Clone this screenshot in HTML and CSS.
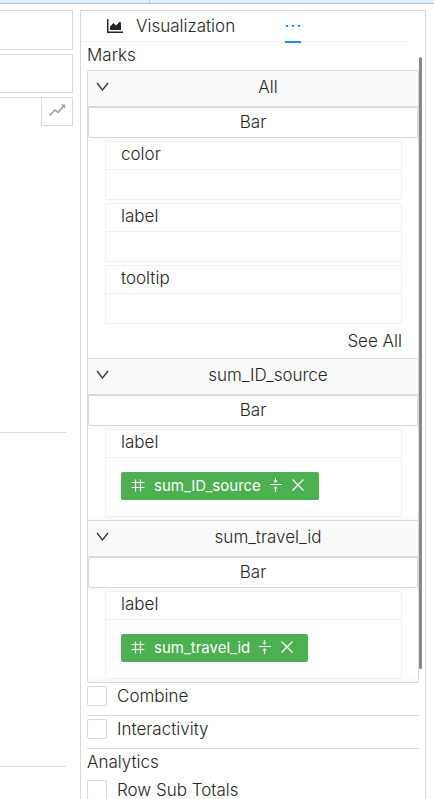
FILE: index.html
```html
<!DOCTYPE html>
<html lang="en">

<head>
    <meta charset="UTF-8">
    <meta name="viewport" content="width=device-width, initial-scale=1.0">
    <title>Visualization</title>
    <link rel="stylesheet" href="styles.css">
</head>

<body>
    <svg class="sprite" aria-hidden="true">
        <symbol id="chevron" viewBox="0 0 14 14">
            <path d="M1 3L6.500 10L12 3" fill="none" stroke="currentColor" stroke-width="1.3" />
        </symbol>
        <symbol id="hash" viewBox="0 0 14 14">
            <path d="M4.5 0.500v12M9.5 0.500v12M0.500 3.500h13M0.500 8.500h13" fill="none" stroke="currentColor" stroke-width="1.2" />
        </symbol>
        <symbol id="aggregate" viewBox="0 0 14 16">
            <path d="M1 6.500h12M6.500 0v4M6.500 9v5" fill="none" stroke="currentColor" stroke-width="1.2" />
            <path d="M4.500 2.500h4L6.500 5zM4.500 10.500h4L6.500 8z" fill="currentColor" />
        </symbol>
        <symbol id="close" viewBox="0 0 14 14">
            <path d="M1.5 0.500l11 11M12.5 0.500l-11 11" fill="none" stroke="currentColor" stroke-width="1.3" />
        </symbol>
    </svg>

    <div class="topbar">
        <div class="topbar-cell"></div>
    </div>

    <div class="layout">
        <div class="workspace">
            <div class="shelf"></div>
            <div class="shelf"></div>
            <div class="toolbar">
                <button class="chart-button" aria-label="Chart">
                    <svg width="16" height="12" viewBox="0 0 16 12">
                        <path d="M0.5 11.5L6 6L9 8.5L14.5 2" fill="none" stroke="currentColor" stroke-width="1.5" />
                        <path d="M12 0.5h4v4z" fill="currentColor" />
                    </svg>
                </button>
            </div>
            <div class="canvas"></div>
            <div class="canvas"></div>
        </div>

        <aside class="panel">
            <nav class="tabs">
                <button class="tab">
                    <svg width="16" height="14" viewBox="0 0 16 14">
                        <path d="M0 0h1.5v12.5H16V14H0z" fill="currentColor" />
                        <path d="M3 11V7.500L6.500 4L9 6.500L13 2.500L14 4V11z" fill="currentColor" />
                    </svg>
                    Visualization
                </button>
                <button class="tab tab-active" aria-label="More">
                    <svg width="16" height="14" viewBox="0 0 16 14">
                        <path d="M1 6h2v2H1zM7 6h2v2H7zM13 6h2v2h-2z" fill="currentColor" />
                    </svg>
                </button>
            </nav>

            <div class="content">
                <h2 class="title">Marks</h2>
                <div class="collapse">
                    <section class="group">
                        <button class="group-header">
                            <svg class="arrow" width="14" height="14"><use href="#chevron" /></svg>
                            <span>All</span>
                        </button>
                        <select class="mark-type" aria-label="All mark type">
                            <option>Bar</option>
                        </select>
                        <div class="cards">
                            <div class="card">
                                <div class="card-title">color</div>
                                <div class="card-body"></div>
                            </div>
                            <div class="card">
                                <div class="card-title">label</div>
                                <div class="card-body"></div>
                            </div>
                            <div class="card">
                                <div class="card-title">tooltip</div>
                                <div class="card-body"></div>
                            </div>
                        </div>
                        <a class="see-all" href="#">See All</a>
                    </section>

                    <section class="group">
                        <button class="group-header">
                            <svg class="arrow" width="14" height="14"><use href="#chevron" /></svg>
                            <span>sum_ID_source</span>
                        </button>
                        <select class="mark-type" aria-label="sum_ID_source mark type">
                            <option>Bar</option>
                        </select>
                        <div class="cards">
                            <div class="card">
                                <div class="card-title">label</div>
                                <div class="card-body card-filled">
                                    <div class="pill">
                                        <svg class="hash" width="14" height="14"><use href="#hash" /></svg>
                                        <span>sum_ID_source</span>
                                        <button class="pill-button" aria-label="Aggregate"><svg width="14" height="16"><use href="#aggregate" /></svg></button>
                                        <button class="pill-button" aria-label="Remove"><svg width="14" height="14"><use href="#close" /></svg></button>
                                    </div>
                                </div>
                            </div>
                        </div>
                    </section>

                    <section class="group">
                        <button class="group-header">
                            <svg class="arrow" width="14" height="14"><use href="#chevron" /></svg>
                            <span>sum_travel_id</span>
                        </button>
                        <select class="mark-type" aria-label="sum_travel_id mark type">
                            <option>Bar</option>
                        </select>
                        <div class="cards">
                            <div class="card">
                                <div class="card-title">label</div>
                                <div class="card-body card-filled">
                                    <div class="pill">
                                        <svg class="hash" width="14" height="14"><use href="#hash" /></svg>
                                        <span>sum_travel_id</span>
                                        <button class="pill-button" aria-label="Aggregate"><svg width="14" height="16"><use href="#aggregate" /></svg></button>
                                        <button class="pill-button" aria-label="Remove"><svg width="14" height="14"><use href="#close" /></svg></button>
                                    </div>
                                </div>
                            </div>
                        </div>
                    </section>
                </div>

                <div class="option">
                    <input type="checkbox" id="combine">
                    <label for="combine">Combine</label>
                </div>
                <div class="option">
                    <input type="checkbox" id="interactivity">
                    <label for="interactivity">Interactivity</label>
                </div>
                <h2 class="title">Analytics</h2>
                <div class="option">
                    <input type="checkbox" id="row-totals">
                    <label for="row-totals">Row Sub Totals</label>
                </div>
            </div>
            <div class="scrollbar"></div>
        </aside>
    </div>
</body>

</html>
```
FILE: styles.css
```css
* {
    box-sizing: border-box;
}

body {
    display: flex;
    flex-direction: column;
    height: 100vh;
    margin: 0;
    overflow: hidden;
    background-color: #fff;
    color: #262626;
    font-family: Inter, "Liberation Sans", sans-serif;
    font-size: 17px;
    font-weight: 300;
    line-height: 24px;
}

button,
select {
    margin: 0;
    padding: 0;
    border: none;
    background: none;
    color: inherit;
    font: inherit;
    cursor: pointer;
}

svg {
    display: block;
    flex: none;
}

.sprite {
    position: absolute;
    width: 0;
    height: 0;
}

.topbar {
    flex: none;
    height: 4px;
    background-color: #e1f2fb;
    border-bottom: 1px solid #bfc5c9;
}

.topbar-cell {
    width: 150px;
    height: 3px;
    border-right: 1px solid #bfc5c9;
}

.layout {
    display: flex;
    flex: 1;
    min-height: 0;
    padding: 6px 8px 0 0;
}

/* left side */
.workspace {
    flex: none;
    width: 80px;
    padding-right: 7px;
}

.shelf {
    height: 40px;
    margin-bottom: 4px;
    border: 1px solid #d9d9d9;
    border-left: none;
}

.shelf + .shelf {
    height: 39px;
}

.toolbar {
    display: flex;
    justify-content: flex-end;
    border-top: 1px solid #d9d9d9;
}

.chart-button {
    display: flex;
    justify-content: center;
    align-items: center;
    width: 32px;
    height: 28px;
    padding-bottom: 4px;
    border: 1px solid #d9d9d9;
    border-top: none;
    color: #999;
}

.canvas {
    height: 334px;
    margin-right: 7px;
    border-bottom: 1px solid #d9d9d9;
}

.toolbar + .canvas {
    height: 307px;
}

/* right side */
.panel {
    position: relative;
    flex: 1;
    min-width: 0;
    border: 1px solid #d9d9d9;
    border-bottom: none;
}

.tabs {
    display: flex;
    gap: 50px;
    height: 31px;
    margin-right: 17px;
    padding-left: 26px;
    border-bottom: 1px solid #f0f0f0;
}

.tab {
    display: flex;
    align-items: center;
    gap: 13px;
    height: 32px;
    border-bottom: 2px solid transparent;
}

.tab-active {
    border-bottom-color: #1890ff;
    color: #1890ff;
}

.content {
    padding: 0 6px;
}

.title {
    margin: 0;
    padding: 1px 0 3px;
    font-size: 17px;
    font-weight: 300;
}

.collapse {
    border: 1px solid #d9d9d9;
    border-radius: 2px;
    background-color: #fafafa;
}

.group + .group {
    border-top: 1px solid #d9d9d9;
}

.group-header {
    display: grid;
    grid-template-columns: 14px 1fr;
    align-items: center;
    width: 100%;
    height: 36px;
    padding: 0 8px 3px;
    column-gap: 16px;
    border-bottom: 1px solid #d9d9d9;
}

.arrow {
    color: #333;
}

.mark-type {
    display: block;
    width: 100%;
    height: 31px;
    padding-bottom: 2px;
    appearance: none;
    border: 1px solid #d9d9d9;
    border-radius: 2px;
    background-color: #fff;
    text-align: center;
    text-align-last: center;
}

.cards {
    display: grid;
    gap: 3px;
    margin: 3px 0;
    padding: 0 16px 0 17px;
    background-color: #fff;
}

.card {
    border: 1px solid #f0f0f0;
    border-radius: 2px;
}

.card-title {
    height: 28px;
    padding: 0 15px;
    border-bottom: 1px solid #f0f0f0;
}

.card-body {
    height: 29px;
}

.card-filled {
    display: flex;
    height: 58px;
    padding: 14px 15px;
}

.see-all {
    display: block;
    margin-top: -3px;
    padding: 5px 16px;
    background-color: #fff;
    color: inherit;
    text-align: right;
    text-decoration: none;
}

.pill {
    display: flex;
    align-items: center;
    gap: 8px;
    height: 28px;
    padding: 0 14px 0 10px;
    border-radius: 2px;
    background-color: #4caf50;
    color: #fff;
    font-size: 15px;
    font-weight: 400;
}

.pill .hash {
    margin-right: 1px;
}

.option {
    display: flex;
    gap: 10px;
    height: 33px;
    padding-top: 3px;
    border-bottom: 1px solid #d9d9d9;
    line-height: 20px;
}

.option input {
    flex: none;
    width: 20px;
    height: 20px;
    margin: 0;
    appearance: none;
    border: 1px solid #d9d9d9;
    border-radius: 2px;
    background-color: #fff;
}

.scrollbar {
    position: absolute;
    top: 46px;
    right: 3px;
    width: 3px;
    height: 612px;
    border-radius: 2px;
    background-color: #888;
}
```
